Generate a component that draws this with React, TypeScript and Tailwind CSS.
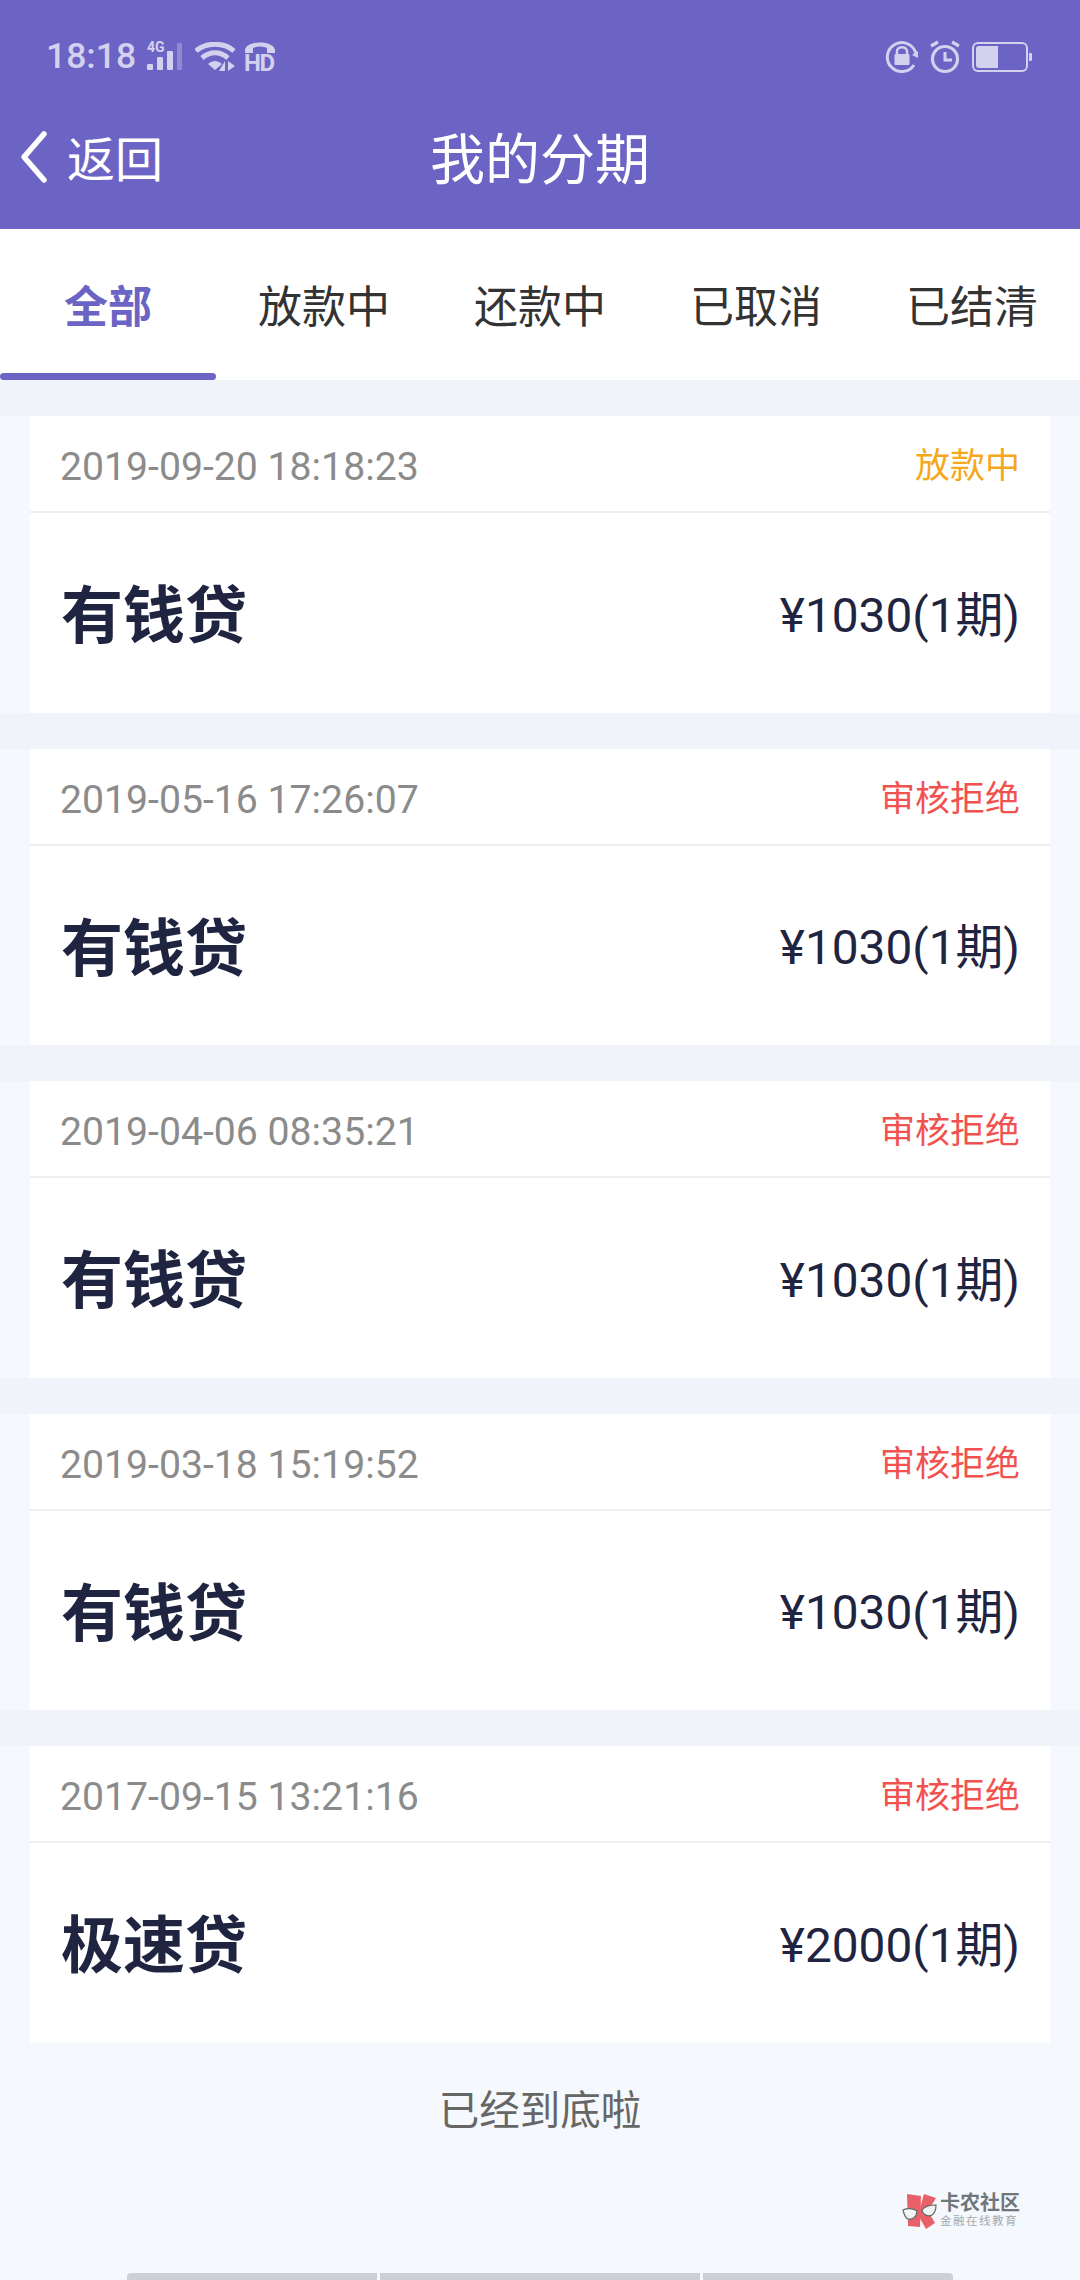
import React from 'react';

const orders = [
  { time: '2019-09-20 18:18:23', status: '放款中', tone: 'text-[#f5a81c]', name: '有钱贷', amount: '¥1030(1期)' },
  { time: '2019-05-16 17:26:07', status: '审核拒绝', tone: 'text-[#f1524f]', name: '有钱贷', amount: '¥1030(1期)' },
  { time: '2019-04-06 08:35:21', status: '审核拒绝', tone: 'text-[#f1524f]', name: '有钱贷', amount: '¥1030(1期)' },
  { time: '2019-03-18 15:19:52', status: '审核拒绝', tone: 'text-[#f1524f]', name: '有钱贷', amount: '¥1030(1期)' },
  { time: '2017-09-15 13:21:16', status: '审核拒绝', tone: 'text-[#f1524f]', name: '极速贷', amount: '¥2000(1期)' },
];

const tabs = ['全部', '放款中', '还款中', '已取消', '已结清'];

const SignalIcon = () => (
  <div className="relative w-[38px] h-[30px] ml-[11px]">
    <span className="absolute left-0 top-[-3px] text-[14px] leading-[16px] font-bold text-[#d3d1ee]">4G</span>
    <svg width="38" height="30" viewBox="0 0 38 30" fill="#d3d1ee">
      <rect x="0" y="22" width="6" height="6" rx="1" />
      <rect x="10" y="15" width="6" height="13" rx="1" />
      <rect x="20" y="9" width="6" height="19" rx="1" />
      <rect x="30" y="1" width="5" height="27" opacity="0.35" />
    </svg>
  </div>
);

const WifiIcon = () => (
  <svg width="42" height="30" viewBox="0 0 42 30" fill="none" className="ml-[10px]">
    <path d="M1 9 C11 0 29 0 39 9" stroke="#d3d1ee" strokeWidth="5" />
    <path d="M7 16 C15 9 25 9 33 16" stroke="#d3d1ee" strokeWidth="5" />
    <path d="M13 22 C18 18 22 18 27 22 L20 28 Z" fill="#d3d1ee" />
    <path d="M30 19 V29 L24 29 Z M33 19 V29 L40 24 Z" fill="#d3d1ee" />
  </svg>
);

const HdIcon = () => (
  <div className="relative w-[30px] h-[30px] ml-[8px]">
    <svg width="30" height="11" viewBox="0 0 30 11" fill="#d3d1ee" className="absolute left-0 top-0">
      <path d="M0 8 C1 -2 29 -2 30 8 L30 11 L22 11 L22 6 C17 4 13 4 8 6 L8 11 L0 11 Z" />
    </svg>
    <span className="absolute left-[-1px] top-[11px] text-[24px] leading-[20px] font-bold tracking-[-1.5px] text-[#d3d1ee]">HD</span>
  </div>
);

const LockIcon = () => (
  <svg width="34" height="34" viewBox="0 0 34 34" fill="none">
    <path d="M29 25 A14.5 14.5 0 1 1 31 14" stroke="#d3d1ee" strokeWidth="3" />
    <path d="M27 15 L33 18 L33 11 Z" fill="#d3d1ee" />
    <path d="M12 14 V11 C12 6 22 6 22 11 V14" stroke="#d3d1ee" strokeWidth="2.5" />
    <rect x="9.5" y="14" width="15" height="11" rx="1" fill="#d3d1ee" />
  </svg>
);

const AlarmIcon = () => (
  <svg width="32" height="34" viewBox="0 0 32 34" fill="none" className="ml-[10px]">
    <circle cx="16" cy="19" r="12.5" stroke="#d3d1ee" strokeWidth="3.2" />
    <path d="M16 12 V20 H23" stroke="#d3d1ee" strokeWidth="3" />
    <path d="M2 6 L9 2 M30 6 L23 2" stroke="#d3d1ee" strokeWidth="3.2" />
  </svg>
);

const BatteryIcon = () => (
  <div className="flex items-center ml-[11px]">
    <div className="w-[56px] h-[30px] rounded-[6px] border-[2px] border-[#d3d1ee] p-[2px]">
      <div className="w-[22px] h-full rounded-l-[3px] bg-[#d3d1ee]" />
    </div>
    <div className="w-[3px] h-[8px] ml-[1px] rounded-r-[1px] bg-[#d3d1ee]" />
  </div>
);

const KanongLogo = () => (
  <div className="flex items-center">
    <svg width="37" height="36" viewBox="0 0 37 36" className="mr-[1px]">
      <path d="M5 1 L19 3 L18 34 L6 33 Z" fill="#e8606a" />
      <path d="M22 1 L34 5 L26 18 L33 30 L24 36 L16 22 Z" fill="#e8606a" />
      <path d="M1 17 C5 15 11 15 15 18 C15 24 10 27 6 26 C3 25 2 21 1 17 Z" fill="#f3f5f5" stroke="#5c6a6a" strokeWidth="1.2" />
      <path d="M34 12 C30 12 23 13 20 17 C21 22 26 24 30 22 C33 20 34 16 34 12 Z" fill="#f3f5f5" stroke="#5c6a6a" strokeWidth="1.2" />
    </svg>
    <div className="flex flex-col items-start">
      <span className="text-[20px] leading-[21px] font-bold text-[#6f767c]">卡农社区</span>
      <span className="text-[11.5px] leading-[15px] tracking-[1.5px] text-[#a5aaae]">金融在线教育</span>
    </div>
  </div>
);

const OrderCard = ({ order }: { order: (typeof orders)[number] }) => (
  <div className="border-b-[36px] border-[#f0f3fa] last:border-b-0">
    <div className="mx-[30px] bg-white">
      <div className="h-[97px] pt-[8px] px-[30px] flex items-center justify-between border-b-2 border-[#eeeeee]">
        <span className="text-[39.2px] text-[#8b8b8b]">{order.time}</span>
        <span className={`text-[35px] ${order.tone}`}>{order.status}</span>
      </div>
      <div className="h-[199.5px] pt-[8px] pl-[31px] pr-[30px] flex items-center justify-between">
        <span className="text-[62px] font-bold text-[#1f2440]">{order.name}</span>
        <span className="text-[47.8px] text-[#1f2440]">{order.amount}</span>
      </div>
    </div>
  </div>
);

export default function App() {
  return (
    <div className="w-[1080px] h-[2280px] overflow-hidden flex flex-col bg-[#f5f8fc] font-['Roboto','Noto_Sans_CJK_SC',sans-serif]">
      <header className="h-[229px] bg-[#6c64c4] shrink-0">
        <div className="h-[110px] pt-[4px] pl-[46px] pr-[48px] flex items-center">
          <span className="text-[35.5px] font-medium text-[#d3d1ee]">18:18</span>
          <SignalIcon />
          <WifiIcon />
          <HdIcon />
          <div className="ml-auto flex items-center">
            <LockIcon />
            <AlarmIcon />
            <BatteryIcon />
          </div>
        </div>
        <div className="h-[95px] pt-[6px] flex items-center justify-between pl-[20px] text-white">
          <div className="w-[240px] flex items-center">
            <svg width="28" height="54" viewBox="0 0 28 54" fill="none" className="mb-[8px]">
              <path d="M24 4 L4 27 L24 50" stroke="#ffffff" strokeWidth="5.5" strokeLinecap="round" strokeLinejoin="round" />
            </svg>
            <span className="ml-[19px] text-[48px]">返回</span>
          </div>
          <span className="text-[55px]">我的分期</span>
          <div className="w-[260px]" />
        </div>
      </header>

      <nav className="h-[151px] bg-white flex shrink-0">
        {tabs.map((tab, i) => (
          <div key={tab} className="flex-1 flex flex-col">
            <div
              className={
                i === 0
                  ? 'flex-1 pt-[14px] flex items-center justify-center text-[44px] font-bold text-[#6c64c4]'
                  : 'flex-1 pt-[14px] flex items-center justify-center text-[44px] text-[#333333]'
              }
            >
              {tab}
            </div>
            <div className={i === 0 ? 'h-[7px] rounded-full bg-[#6c64c4]' : 'h-[7px]'} />
          </div>
        ))}
      </nav>

      <div className="h-[36px] bg-[#f0f3fa] shrink-0" />

      <main className="shrink-0">
        {orders.map((order) => (
          <OrderCard key={order.time} order={order} />
        ))}
      </main>

      <div className="mt-[38px] text-center text-[40.5px] text-[#666666]">已经到底啦</div>

      <div className="mt-[52px] pr-[60px] flex justify-end">
        <KanongLogo />
      </div>

      <div className="mt-auto flex justify-center gap-[3px] shrink-0">
        <div className="w-[250px] h-[7px] rounded-tl-[4px] bg-[#cdd1d5]" />
        <div className="w-[320px] h-[7px] bg-[#cdd1d5]" />
        <div className="w-[250px] h-[7px] rounded-tr-[4px] bg-[#cdd1d5]" />
      </div>
    </div>
  );
}
